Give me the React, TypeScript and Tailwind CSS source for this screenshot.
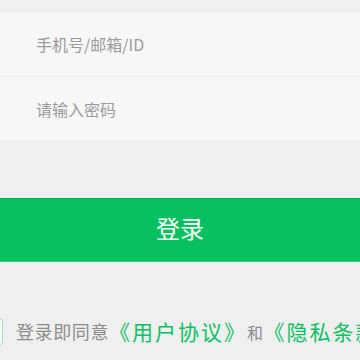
export default function App() {
  return (
    <main
      className="w-[360px] h-[360px] overflow-hidden bg-[#efefef]"
      style={{ fontFamily: '"Noto Sans CJK SC", "Noto Sans", sans-serif' }}
    >
      <div className="h-[13px]" />

      {/* Inputs */}
      <div className="bg-[#f7f7f7]">
        <div className="h-[64px] flex items-center px-[36px] pb-[2px] border-b border-[#ebebeb]">
          <input
            className="w-full bg-transparent outline-none text-[16px] placeholder-[#9a9a9a]"
            placeholder="手机号/邮箱/ID"
          />
        </div>
        <div className="h-[63px] flex items-center px-[36px]">
          <input
            type="password"
            className="w-full bg-transparent outline-none text-[16px] placeholder-[#9a9a9a]"
            placeholder="请输入密码"
          />
        </div>
      </div>

      <div className="h-[58px]" />

      {/* Login button */}
      <button className="w-full h-[64px] pb-[5px] bg-[#07c160] border-t border-[#06ad56] border-b border-b-[#2fd07e] text-white text-[24px]">
        登录
      </button>

      {/* Agreement */}
      <div className="mt-[54px] flex items-center gap-[13px] -ml-[24px] whitespace-nowrap">
        <div className="w-[27px] h-[27px] rounded-[3px] border border-[#9fe3bd] bg-[#f7f7f7] shrink-0" />
        <p className="text-[18px] tracking-[0.6px] text-[#8c8c8c] flex items-center">
          <span>登录即同意</span>
          <span className="text-[21px] tracking-[2px] text-[#07c160]">《用户协议》</span>
          <span className="text-[16px]">和</span>
          <span className="text-[21px] tracking-[2px] text-[#07c160]">《隐私条款》</span>
        </p>
      </div>
    </main>
  );
}
